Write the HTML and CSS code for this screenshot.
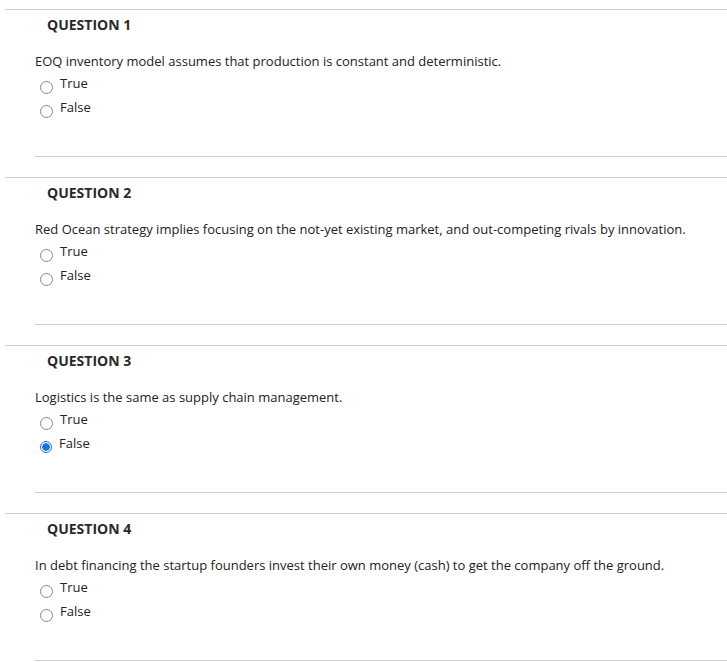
FILE: index.html
```html
<!DOCTYPE html>
<html>
<head>
<meta charset="utf-8">
<link rel="stylesheet" href="styles.css">
</head>
<body>
<div class="page">
  <section class="question">
    <h2 class="q-title">QUESTION 1</h2>
    <div class="q-body">
      <p class="q-text">EOQ inventory model assumes that production is constant and deterministic.</p>
      <ul class="options">
        <li class="option"><span class="radio"></span>True</li>
        <li class="option"><span class="radio"></span>False</li>
      </ul>
    </div>
  </section>
  <section class="question">
    <h2 class="q-title">QUESTION 2</h2>
    <div class="q-body">
      <p class="q-text">Red Ocean strategy implies focusing on the not-yet existing market, and out-competing rivals by innovation.</p>
      <ul class="options">
        <li class="option"><span class="radio"></span>True</li>
        <li class="option"><span class="radio"></span>False</li>
      </ul>
    </div>
  </section>
  <section class="question">
    <h2 class="q-title">QUESTION 3</h2>
    <div class="q-body">
      <p class="q-text">Logistics is the same as supply chain management.</p>
      <ul class="options">
        <li class="option"><span class="radio"></span>True</li>
        <li class="option"><span class="radio checked"></span>False</li>
      </ul>
    </div>
  </section>
  <section class="question">
    <h2 class="q-title">QUESTION 4</h2>
    <div class="q-body">
      <p class="q-text">In debt financing the startup founders invest their own money (cash) to get the company off the ground.</p>
      <ul class="options">
        <li class="option"><span class="radio"></span>True</li>
        <li class="option"><span class="radio"></span>False</li>
      </ul>
    </div>
  </section>
</div>
</body>
</html>
```
FILE: styles.css
```css
html, body {
  margin: 0;
  padding: 0;
  background: #fff;
}
body {
  font-family: "Open Sans", "Liberation Sans", sans-serif;
  color: #333;
}
.page {
  padding-top: 9px;
  margin-left: 5px;
}
.question {
  border-top: 1px solid #d0d0d0;
  margin-bottom: 20px;
}
.q-title {
  margin: 0;
  padding: 5px 0 0 42px;
  font-size: 14px;
  line-height: 20px;
  font-weight: 700;
  color: #2a2a2a;
}
.q-body {
  margin-left: 30px;
  padding-bottom: 37px;
  border-bottom: 1px solid #d0d0d0;
}
.q-text {
  margin: 16px 0 0 0;
  font-size: 13px;
  line-height: 20px;
  color: #222;
}
.options {
  list-style: none;
  margin: 0;
  padding: 0;
}
.option {
  display: flex;
  align-items: center;
  height: 24px;
  font-size: 13px;
  color: #222;
  padding-left: 5px;
}
.radio {
  width: 11px;
  height: 11px;
  border: 1px solid #888;
  border-radius: 50%;
  margin-right: 7px;
  margin-top: 8px;
  box-sizing: content-box;
  flex: none;
  background: #fff;
}
.radio.checked {
  border-color: #1a73e8;
  background: radial-gradient(circle, #1a73e8 0 3.5px, #fff 4px);
  border-width: 1.5px;
  width: 10px;
  height: 10px;
}
```
